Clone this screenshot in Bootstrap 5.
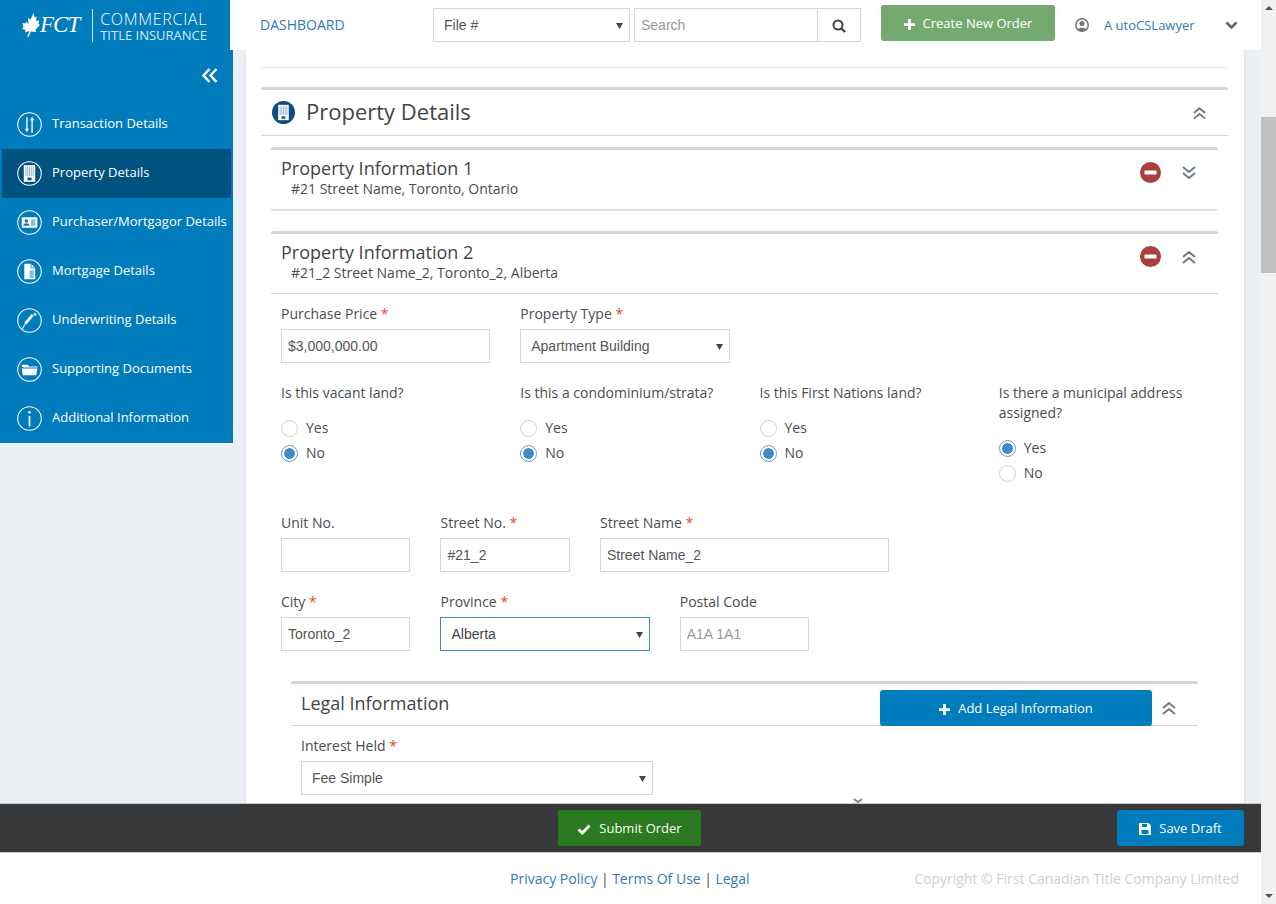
<!DOCTYPE html>
<html lang="en">
<head>
  <meta charset="UTF-8" />
  <meta name="viewport" content="width=device-width, initial-scale=1.0" />
  <title>Property Details</title>
  <link href="https://cdn.jsdelivr.net/npm/bootstrap@5.3.0/dist/css/bootstrap.min.css" rel="stylesheet" />
  <style>
    html, body { height: 100%; overflow: hidden; }
    body {
      background: #eceff4;
      color: #4a4d52;
      font-family: "Open Sans", sans-serif;
      font-size: 14px;
      line-height: 20px;
    }
    a { text-decoration: none; color: #337ab7; }
    .app-shell { width: 1276px; height: 904px; }
    .app-main { width: 1261px; height: 904px; }
    /* header */
    .top-bar { height: 50px; background: #fff; flex: none; }
    .logo-box { width: 230px; height: 50px; background: #007bbb; color: #fff; padding-left: 22px; }
    .logo-fct { font-family: "Liberation Serif", serif; font-style: italic; font-size: 23px; letter-spacing: -1px; }
    .logo-rule { width: 1px; height: 33px; background: #cfe6f3; margin: 0 7px 0 13px; }
    .logo-words { font-size: 16px; font-weight: 300; letter-spacing: .7px; line-height: 16px; width: 118px; white-space: nowrap; padding-top: 4px; }
    .logo-words div + div { font-size: 13px; font-weight: 400; letter-spacing: 0; color: #d5eaf5; }
    .dash-link { margin-left: 30px; width: 173px; text-transform: uppercase; font-size: 14px; }
    .plain-input, .plain-select {
      height: 34px;
      border: 1px solid #d2d6de;
      border-radius: 0;
      font-family: "Liberation Sans", sans-serif;
      font-size: 14px;
      color: #555;
      padding: 6px 6px;
      box-shadow: none;
    }
    .plain-select {
      padding-left: 10px;
      background-image: url("data:image/svg+xml,%3Csvg xmlns='http://www.w3.org/2000/svg' width='7' height='7'%3E%3Cpath d='M0 1h7L3.5 7z' fill='%23444'/%3E%3C/svg%3E");
      background-size: 7px 7px;
      background-position: right 6px center;
    }
    .plain-input::placeholder { color: #999; }
    .file-select { width: 197px; flex: none; }
    .search-box { width: 227px; margin-left: 4px; flex: none; }
    .search-btn { width: 43px; height: 34px; border: 1px solid #d2d6de; border-left: 0; background: #fff; padding: 0; flex: none; }
    .app-btn {
      border-radius: 3px;
      border: 0;
      color: #fff;
      font-size: 13px;
      height: 36px;
      padding: 2px 0 0;
    }
    .app-btn:hover { color: #fff; }
    .btn-create { background: #74aa70; width: 174px; margin-left: 20px; margin-top: -4px; flex: none; }
    .user-ico { margin-left: 20px; flex: none; }
    .user-name { font-size: 13px; margin-left: 15px; width: 121px; white-space: nowrap; }
    /* body */
    .mid-area { height: 753px; overflow: hidden; flex: none; }
    .side-menu { width: 233px; height: 393px; background: #007bbb; flex: none; color: #fff; }
    .side-toggle { height: 50px; padding: 18px 15px 0 0; text-align: right; line-height: 0; }
    .side-item {
      height: 49px;
      margin-left: 2px;
      width: 229px;
      padding-left: 15px;
      color: #fff;
      font-size: 13px;
      white-space: nowrap;
    }
    .side-item:hover { color: #fff; }
    .side-item.current { background: #00527f; }
    .side-item svg { margin-right: 10px; flex: none; }
    .side-text { padding-bottom: 3px; }
    .work-panel { width: 998px; margin-left: 13px; background: #fff; padding: 0 16px 0 15px; flex: none; box-shadow: 0 0 1px rgba(0,0,0,.25); }
    .stub-card { height: 18px; border-bottom: 1px solid #e3e5ea; border-radius: 0 0 3px 3px; box-shadow: 0 0 1px rgba(0,0,0,.08); margin-bottom: 19px; }
    .sect-card {
      --bs-card-border-width: 0;
      border: 0;
      border-top: 3px solid #d2d6de;
      border-radius: 3px;
      background: #fff;
      box-shadow: 0 1px 1px rgba(0,0,0,.1), 0 0 1px rgba(0,0,0,.08);
      color: inherit;
    }
    .sect-head {
      background: #fff;
      border: 0;
      border-bottom: 1px solid #d2d6de;
      border-radius: 0;
      padding: 0;
    }
    .main-head { height: 46px; padding: 0 21px 0 11px; font-size: 22px; color: #444; }
    .main-head svg.sect-ico { margin-right: 11px; }
    .head-text { padding-bottom: 4px; }
    .main-list { padding: 11px 10px 0; }
    .prop-card { margin-bottom: 21px; }
    .prop-head { padding: 6px 21px 0 10px; height: 60px; }
    .prop-card.closed .prop-head { border-bottom: 1px solid #d9dce2; }
    .prop-title { font-size: 18px; line-height: 24px; color: #444; }
    .prop-addr { padding-left: 10px; line-height: 17px; }
    .head-tools { margin-top: 6px; }
    .head-tools svg + svg { margin-left: 20px; }
    .form-zone { padding: 0 10px; }
    .form-zone .row { --bs-gutter-x: 30px; }
    .field-label { display: block; margin-bottom: 5px; line-height: 20px; color: #4a4d52; }
    .need { color: #dd4b39; }
    .row-top { padding-top: 10px; }
    .row-q { margin-top: 20px; height: 130px; }
    .row-addr { height: 79px; }
    .row-city { height: 65px; }
    .q-label { margin-bottom: 15px; min-height: 20px; }
    .radio-line { margin: 0 0 5px; padding: 0; min-height: 20px; display: flex; align-items: center; }
    .radio-line .form-check-input {
      float: none;
      margin: 0 8px 0 0;
      width: 17px;
      height: 17px;
      border: 1px solid #cfcfcf;
      background-color: #fff;
      flex: none;
    }
    .radio-line .form-check-input:checked[type=radio] {
      background-color: #fff;
      border-color: #5b9bd5;
      background-image: radial-gradient(circle, #428bca 0 5px, transparent 5.6px);
    }
    .radio-line .form-check-label { color: #4a4d52; }
    .focus-sel { border-color: #3c8dbc; color: #444; }
    .legal-card { margin: 24px 0 0 10px; width: 907px; }
    .legal-head { height: 42px; padding-left: 10px; font-size: 18px; color: #444; }
    .btn-add { background: #007bbb; width: 272px; margin-left: auto; margin-top: 6px; align-self: flex-start; flex: none; }
    .legal-chev { margin: 6px 21px 0 9px; flex: none; }
    .legal-body { padding: 10px 10px 0; height: 300px; }
    .legal-body .row { --bs-gutter-x: 30px; }
    .clip-chevron { margin: 3px 0 0 552px; display: block; }
    /* bottom */
    .action-bar { height: 50px; background: #36383a; border-top: 1px solid #c8c8c8; border-bottom: 1px solid #c8c8c8; flex: none; padding-left: 558px; padding-right: 17px; }
    .btn-submit { background: #2b7a21; width: 143px; }
    .btn-draft { background: #007bbb; width: 127px; margin-left: auto; }
    .page-foot { height: 51px; background: #fff; flex: none; padding: 0 22px 0 510px; }
    .foot-sep { margin: 0 3.5px; }
    .foot-copy { color: #d0cfcf; margin-left: auto; }
    /* fake scrollbar */
    .fake-scroll { width: 15px; height: 904px; background: #f1f1f1; position: relative; flex: none; }
    .scroll-thumb { position: absolute; left: 0; top: 117px; width: 15px; height: 156px; background: #c1c1c1; }
    .scroll-up, .scroll-down { position: absolute; left: 4px; width: 0; height: 0; border-left: 4px solid transparent; border-right: 4px solid transparent; }
    .scroll-up { top: 6px; border-bottom: 4px solid #505050; }
    .scroll-down { bottom: 6px; border-top: 4px solid #505050; }
  </style>
</head>
<body>
  <svg width="0" height="0" class="position-absolute">
    <symbol id="dbl-up" viewBox="0 0 16 14"><path d="M2 7l6-5 6 5M2 13l6-5 6 5" fill="none" stroke="#6f7c87" stroke-width="2"/></symbol>
    <symbol id="dbl-down" viewBox="0 0 16 14"><path d="M2 1l6 5 6-5M2 7l6 5 6-5" fill="none" stroke="#6f7c87" stroke-width="2"/></symbol>
    <symbol id="minus-dot" viewBox="0 0 21 21"><circle cx="10.5" cy="10.5" r="10.5" fill="#a8403f"/><rect x="4.5" y="8.5" width="12" height="4" rx=".5" fill="#fff"/></symbol>
    <symbol id="plus-ico" viewBox="0 0 12 12"><path d="M4.5 0h3v4.5H12v3H7.5V12h-3V7.5H0v-3h4.5z" fill="#fff"/></symbol>
    <symbol id="tower" viewBox="0 0 24 24"><path d="M6.500 4h11v16h-11z" fill="currentColor"/><path d="M8.500 5.500v9M10.250 5.500v9M12 5.500v9M13.750 5.500v9M15.500 5.500v9" stroke="var(--tower-gap)" stroke-width=".6" stroke-opacity=".7"/><rect x="10" y="16" width="4" height="2.500" fill="var(--tower-gap)"/></symbol>
  </svg>

  <div class="app-shell d-flex">
    <div class="app-main d-flex flex-column">
      <header class="top-bar d-flex align-items-center">
        <div class="logo-box d-flex align-items-center">
          <svg width="18" height="25" viewBox="0 0 18 25" class="flex-shrink-0"><path d="M11.500 0l1 4.500 2-1-.3 5 3-1.500-.7 4 1.500 1-4.500 4.500.5 2.500-5-.5-2.500 5.500-1.200-.6 2-5.500-4.300 1.600.3-2.500L0 15.500l1.500-1.500L.5 10l3 .5.5-2 2.500 2.500-.5-6 2.500 1.500z" fill="#fff"/></svg>
          <span class="logo-fct">FCT</span>
          <span class="logo-rule"></span>
          <div class="logo-words"><div>COMMERCIAL</div><div>TITLE INSURANCE</div></div>
        </div>
        <a class="dash-link" href="#">Dashboard</a>
        <select class="form-select plain-select file-select"><option>File #</option></select>
        <div class="search-box d-flex">
          <input class="form-control plain-input" type="text" placeholder="Search" />
          <button class="search-btn" type="button" aria-label="Search">
            <svg width="14" height="14" viewBox="0 0 14 14"><circle cx="6" cy="6" r="4.500" fill="none" stroke="#444" stroke-width="2"/><path d="M9.500 9.500L13 13" stroke="#444" stroke-width="2.400"/></svg>
          </button>
        </div>
        <button class="btn app-btn btn-create d-flex align-items-center justify-content-center gap-2" type="button">
          <svg width="11" height="11"><use href="#plus-ico"/></svg>Create New Order
        </button>
        <svg class="user-ico" width="14" height="14" viewBox="0 0 14 14"><circle cx="7" cy="7" r="6.200" fill="none" stroke="#757575" stroke-width="1.500"/><circle cx="7" cy="5.500" r="2.500" fill="#757575"/><path d="M2.800 11.500c.6-2.500 7.800-2.500 8.400 0L7 13.500z" fill="#757575"/></svg>
        <a class="user-name" href="#">A utoCSLawyer</a>
        <svg width="13" height="9" viewBox="0 0 13 9"><path d="M1.500 1.500l5 5 5-5" fill="none" stroke="#666" stroke-width="2.600"/></svg>
      </header>

      <div class="mid-area d-flex">
        <nav class="side-menu">
          <div class="side-toggle">
            <svg width="16" height="15" viewBox="0 0 16 15"><path d="M7.500 1L1.500 7.500 7.500 14M14.500 1L8.500 7.500 14.500 14" fill="none" stroke="#fff" stroke-width="2.400"/></svg>
          </div>
          <a class="side-item d-flex align-items-center" href="#">
            <svg width="25" height="25" viewBox="0 0 24 24" fill="none" stroke="#fff"><circle cx="12" cy="12" r="11.300"/><path d="M9.500 5v12M14.500 7v13" stroke-width="1.300"/><path d="M7.500 16h4l-2 3.500zM12.500 8h4l-2-3.500z" fill="#fff" stroke="none"/></svg>
            <span class="side-text">Transaction Details</span>
          </a>
          <a class="side-item current d-flex align-items-center" href="#">
            <svg width="25" height="25" viewBox="0 0 24 24" fill="none" stroke="#fff" style="--tower-gap:#00527f"><circle cx="12" cy="12" r="11.300"/><g color="#fff" stroke="none"><use href="#tower"/></g></svg>
            <span class="side-text">Property Details</span>
          </a>
          <a class="side-item d-flex align-items-center" href="#">
            <svg width="25" height="25" viewBox="0 0 24 24" fill="none" stroke="#fff"><circle cx="12" cy="12" r="11.300"/><rect x="4.500" y="7" width="15" height="10" rx="1" fill="#fff" stroke="none"/><circle cx="9" cy="10.500" r="1.700" fill="#007bbb" stroke="none"/><path d="M6 15c.3-3 5.700-3 6 0z" fill="#007bbb" stroke="none"/><rect x="13.500" y="9" width="4" height="6" fill="#7fbddd" stroke="none"/></svg>
            <span class="side-text">Purchaser/Mortgagor Details</span>
          </a>
          <a class="side-item d-flex align-items-center" href="#">
            <svg width="25" height="25" viewBox="0 0 24 24" fill="none" stroke="#fff"><circle cx="12" cy="12" r="11.300"/><path d="M7 4.500h6.500L17.500 8.500v11H7z" fill="#fff" stroke="none"/><path d="M13.500 4.500v4h4" stroke="#007bbb" stroke-width=".8"/><rect x="12" y="11" width="4" height="7" fill="#7fbddd" stroke="none"/></svg>
            <span class="side-text">Mortgage Details</span>
          </a>
          <a class="side-item d-flex align-items-center" href="#">
            <svg width="25" height="25" viewBox="0 0 24 24" fill="none" stroke="#fff"><circle cx="12" cy="12" r="11.300"/><path d="M8 15L15 6.500" stroke-width="2.600"/><path d="M15.500 5.500l1.500-1 2 1.800-1.200 1.500z" fill="#fff" stroke="none"/><path d="M5 20.500L8 15" stroke-width="1"/></svg>
            <span class="side-text">Underwriting Details</span>
          </a>
          <a class="side-item d-flex align-items-center" href="#">
            <svg width="25" height="25" viewBox="0 0 24 24" fill="none" stroke="#fff"><circle cx="12" cy="12" r="11.300"/><path d="M4.500 9V7.500h6l1 1.500h8v1H6.500z" fill="#fff" stroke="none"/><path d="M4.500 11h15l-1 6.500H5.500z" fill="#fff" stroke="none"/></svg>
            <span class="side-text">Supporting Documents</span>
          </a>
          <a class="side-item d-flex align-items-center" href="#">
            <svg width="25" height="25" viewBox="0 0 24 24" fill="none" stroke="#fff"><circle cx="12" cy="12" r="11.300"/><circle cx="12" cy="6" r="1.300" fill="#fff" stroke="none"/><path d="M12 9.500v10" stroke-width="1.600"/></svg>
            <span class="side-text">Additional Information</span>
          </a>
        </nav>

        <main class="work-panel">
          <div class="stub-card"></div>
          <section class="card sect-card">
            <div class="card-header sect-head main-head d-flex align-items-center">
              <svg class="sect-ico" width="23" height="23" viewBox="0 0 24 24" style="--tower-gap:#0e4f7c"><circle cx="12" cy="12" r="12" fill="#0e4f7c"/><g color="#fff"><use href="#tower"/></g></svg>
              <span class="head-text">Property Details</span>
              <svg class="ms-auto" width="15" height="14"><use href="#dbl-up"/></svg>
            </div>
            <div class="main-list">
              <div class="card sect-card prop-card closed">
                <div class="card-header sect-head prop-head d-flex justify-content-between">
                  <div>
                    <div class="prop-title">Property Information 1</div>
                    <div class="prop-addr">#21 Street Name, Toronto, Ontario</div>
                  </div>
                  <div class="head-tools d-flex align-items-start">
                    <svg width="21" height="21"><use href="#minus-dot"/></svg>
                    <svg class="mt-1" width="16" height="14"><use href="#dbl-down"/></svg>
                  </div>
                </div>
              </div>

              <div class="card sect-card prop-card">
                <div class="card-header sect-head prop-head d-flex justify-content-between">
                  <div>
                    <div class="prop-title">Property Information 2</div>
                    <div class="prop-addr">#21_2 Street Name_2, Toronto_2, Alberta</div>
                  </div>
                  <div class="head-tools d-flex align-items-start">
                    <svg width="21" height="21"><use href="#minus-dot"/></svg>
                    <svg class="mt-1" width="16" height="14"><use href="#dbl-up"/></svg>
                  </div>
                </div>
                <div class="form-zone">
                  <div class="row row-top">
                    <div class="col-3">
                      <label class="field-label">Purchase Price <span class="need">*</span></label>
                      <input class="form-control plain-input" type="text" value="$3,000,000.00" />
                    </div>
                    <div class="col-3">
                      <label class="field-label">Property Type <span class="need">*</span></label>
                      <select class="form-select plain-select"><option>Apartment Building</option></select>
                    </div>
                  </div>
                  <div class="row row-q">
                    <div class="col-3">
                      <div class="field-label q-label">Is this vacant land?</div>
                      <div class="form-check radio-line"><input class="form-check-input" type="radio" name="q1" /><label class="form-check-label">Yes</label></div>
                      <div class="form-check radio-line"><input class="form-check-input" type="radio" name="q1" checked /><label class="form-check-label">No</label></div>
                    </div>
                    <div class="col-3">
                      <div class="field-label q-label">Is this a condominium/strata?</div>
                      <div class="form-check radio-line"><input class="form-check-input" type="radio" name="q2" /><label class="form-check-label">Yes</label></div>
                      <div class="form-check radio-line"><input class="form-check-input" type="radio" name="q2" checked /><label class="form-check-label">No</label></div>
                    </div>
                    <div class="col-3">
                      <div class="field-label q-label">Is this First Nations land?</div>
                      <div class="form-check radio-line"><input class="form-check-input" type="radio" name="q3" /><label class="form-check-label">Yes</label></div>
                      <div class="form-check radio-line"><input class="form-check-input" type="radio" name="q3" checked /><label class="form-check-label">No</label></div>
                    </div>
                    <div class="col-3">
                      <div class="field-label q-label">Is there a municipal address assigned?</div>
                      <div class="form-check radio-line"><input class="form-check-input" type="radio" name="q4" checked /><label class="form-check-label">Yes</label></div>
                      <div class="form-check radio-line"><input class="form-check-input" type="radio" name="q4" /><label class="form-check-label">No</label></div>
                    </div>
                  </div>
                  <div class="row row-addr">
                    <div class="col-2">
                      <label class="field-label">Unit No.</label>
                      <input class="form-control plain-input" type="text" />
                    </div>
                    <div class="col-2">
                      <label class="field-label">Street No. <span class="need">*</span></label>
                      <input class="form-control plain-input" type="text" value="#21_2" />
                    </div>
                    <div class="col-4">
                      <label class="field-label">Street Name <span class="need">*</span></label>
                      <input class="form-control plain-input" type="text" value="Street Name_2" />
                    </div>
                  </div>
                  <div class="row row-city">
                    <div class="col-2">
                      <label class="field-label">City <span class="need">*</span></label>
                      <input class="form-control plain-input" type="text" value="Toronto_2" />
                    </div>
                    <div class="col-3">
                      <label class="field-label">Province <span class="need">*</span></label>
                      <select class="form-select plain-select focus-sel"><option>Alberta</option></select>
                    </div>
                    <div class="col-2">
                      <label class="field-label">Postal Code</label>
                      <input class="form-control plain-input" type="text" placeholder="A1A 1A1" />
                    </div>
                  </div>
                  <div class="card sect-card legal-card">
                    <div class="card-header sect-head legal-head d-flex align-items-center">
                      <span class="head-text">Legal Information</span>
                      <button class="btn app-btn btn-add d-flex align-items-center justify-content-center gap-2" type="button">
                        <svg width="11" height="11"><use href="#plus-ico"/></svg>Add Legal Information
                      </button>
                      <svg class="legal-chev" width="16" height="14"><use href="#dbl-up"/></svg>
                    </div>
                    <div class="legal-body">
                      <div class="row">
                        <div class="col-5">
                          <label class="field-label">Interest Held <span class="need">*</span></label>
                          <select class="form-select plain-select"><option>Fee Simple</option></select>
                        </div>
                      </div>
                      <svg class="clip-chevron" width="10" height="9" viewBox="0 0 10 9"><path d="M1 1l4 3 4-3M1 5l4 3 4-3" fill="none" stroke="#7d8790" stroke-width="2"/></svg>
                    </div>
                  </div>
                </div>
              </div>
            </div>
          </section>
        </main>
      </div>

      <div class="action-bar d-flex align-items-center">
        <button class="btn app-btn btn-submit d-flex align-items-center justify-content-center gap-2" type="button">
          <svg width="14" height="11" viewBox="0 0 14 11"><path d="M1.500 5.500l3.800 3.500L12.500 1.500" fill="none" stroke="#fff" stroke-width="2.800"/></svg>Submit Order
        </button>
        <button class="btn app-btn btn-draft d-flex align-items-center justify-content-center gap-2" type="button">
          <svg width="12" height="12" viewBox="0 0 12 12"><path d="M0 0h9.500L12 2.500V12H0z" fill="#fff"/><rect x="3" y="1" width="5" height="3" fill="#007bbb"/><rect x="2.500" y="7" width="7" height="4" fill="#007bbb"/></svg>Save Draft
        </button>
      </div>

      <footer class="page-foot d-flex align-items-center">
        <a href="#">Privacy Policy</a><span class="foot-sep">|</span><a href="#">Terms Of Use</a><span class="foot-sep">|</span><a href="#">Legal</a>
        <span class="foot-copy">Copyright © First Canadian Title Company Limited</span>
      </footer>
    </div>

    <div class="fake-scroll">
      <div class="scroll-up"></div>
      <div class="scroll-thumb"></div>
      <div class="scroll-down"></div>
    </div>
  </div>
  <script src="https://cdn.jsdelivr.net/npm/bootstrap@5.3.0/dist/js/bootstrap.bundle.min.js"></script>
</body>
</html>
